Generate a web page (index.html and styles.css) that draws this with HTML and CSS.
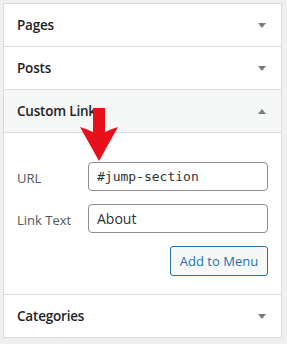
FILE: index.html
```html
<!DOCTYPE html>
<html lang="en">
<head>
  <meta charset="UTF-8" />
  <meta name="viewport" content="width=device-width, initial-scale=1.0" />
  <title>Add Menu Items</title>
  <link rel="stylesheet" href="styles.css">
</head>
<body>
  <div class="menu-box">
    <div class="section">
      <div class="section-head">
        <h3>Pages</h3>
        <span class="toggle down"></span>
      </div>
    </div>
    <div class="section">
      <div class="section-head">
        <h3>Posts</h3>
        <span class="toggle down"></span>
      </div>
    </div>
    <div class="section open">
      <div class="section-head">
        <h3>Custom Links</h3>
        <span class="toggle up"></span>
      </div>
      <div class="section-body">
        <div class="field">
          <label for="url">URL</label>
          <input type="text" id="url" class="mono" value="#jump-section" />
        </div>
        <div class="field">
          <label for="linkText">Link Text</label>
          <input type="text" id="linkText" value="About" />
        </div>
        <div class="actions">
          <button>Add to Menu</button>
        </div>
        <!-- red pointer over the URL field -->
        <svg class="arrow" width="40" height="54" viewBox="0 0 40 54">
          <path d="M13 0 H25 V24 Q31 21 38 19 L19 53 L0 19 Q7 21 13 24 Z" fill="#e8101b"/>
        </svg>
      </div>
    </div>
    <div class="section">
      <div class="section-head">
        <h3>Categories</h3>
        <span class="toggle down"></span>
      </div>
    </div>
  </div>
</body>
</html>
```

FILE: styles.css
```css
body {
  margin: 0;
  padding: 3px 5px 5px 3px;
  background: #f0f0f1;
  font-family: "Open Sans", Arial, sans-serif;
  color: #1d2327;
}
.menu-box {
  background: white;
  border: 1px solid #dcdcde;
}
.section {
  border-bottom: 1px solid #dcdcde;
}
.section:last-child {
  border-bottom: none;
}
.section-head {
  height: 42px;
  display: flex;
  align-items: center;
  justify-content: space-between;
  padding: 0 15px 0 13px;
}
.section-head h3 {
  margin: 0;
  font-size: 13.5px;
  font-weight: 600;
  letter-spacing: -0.2px;
}
.open .section-head {
  background: #f6f7f7;
  border-bottom: 1px solid #dcdcde;
}
.toggle {
  width: 0;
  height: 0;
  border-left: 4px solid transparent;
  border-right: 4px solid transparent;
}
.toggle.down {
  border-top: 5px solid #787c82;
}
.toggle.up {
  border-bottom: 5px solid #787c82;
}
.section-body {
  position: relative;
  padding: 29px 13px 18px 13px;
}
.field {
  display: flex;
  align-items: center;
  margin-bottom: 13px;
}
.field label {
  width: 71px;
  font-size: 13px;
  color: #50575e;
  padding-top: 3px;
}
.field input {
  width: 180px;
  height: 29px;
  box-sizing: border-box;
  border: 1px solid #8c8f94;
  border-radius: 4px;
  padding: 0 8px;
  font-family: "Open Sans", Arial, sans-serif;
  font-size: 14px;
  color: #2c3338;
}
.field input.mono {
  font-family: "DejaVu Sans Mono", "Liberation Mono", monospace;
  font-size: 13px;
}
.actions {
  display: flex;
  justify-content: flex-end;
}
.actions button {
  width: 98px;
  height: 30px;
  background: #f6f7f7;
  border: 1px solid #2271b1;
  border-radius: 3px;
  color: #2271b1;
  font-family: "Open Sans", Arial, sans-serif;
  font-size: 13px;
  cursor: pointer;
}
.arrow {
  position: absolute;
  left: 76px;
  top: -25px;
}
```
